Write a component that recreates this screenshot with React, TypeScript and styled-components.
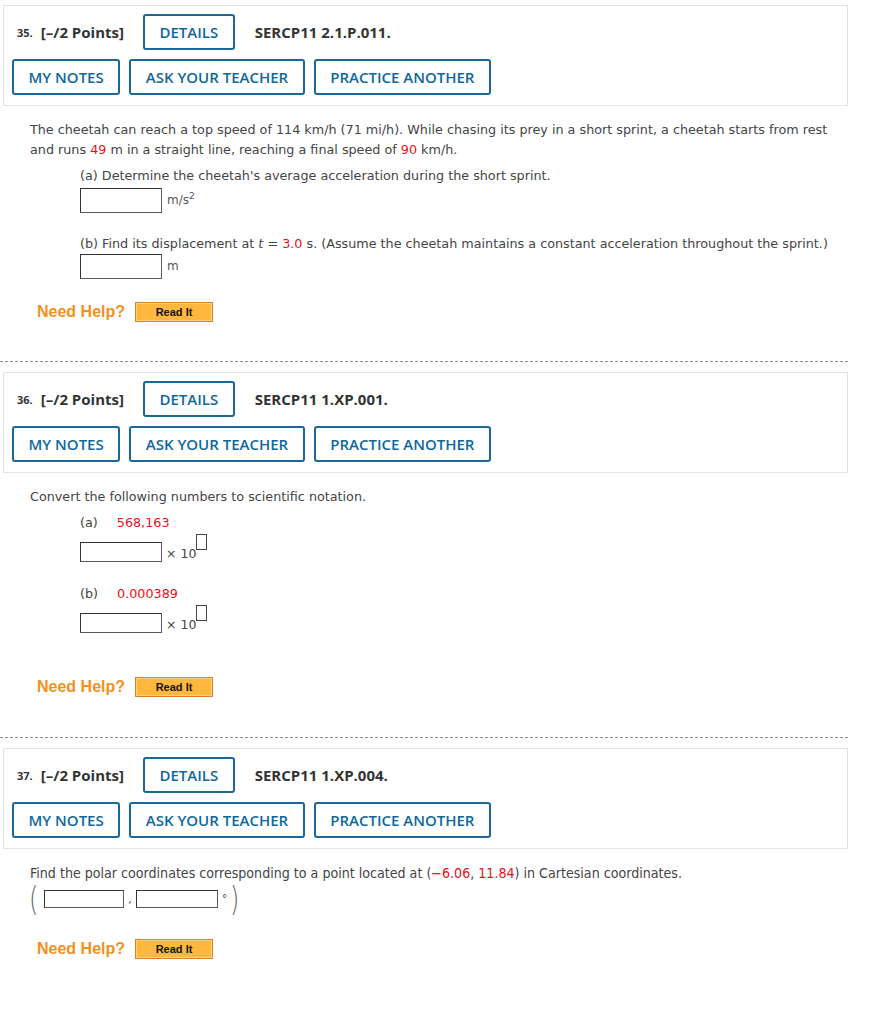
import React from "react";
import styled, { createGlobalStyle } from "styled-components";

const Global = createGlobalStyle`
  html, body { margin: 0; padding: 0; background: #fff; }
  body { font-family: "DejaVu Sans", Verdana, sans-serif; color: #333; }
`;

const Page = styled.div`
  width: 848px;
  padding-top: 5px;
`;

const Question = styled.section`
  display: flex;
  flex-direction: column;
`;

const Card = styled.div`
  margin-left: 3px;
  border: 1px solid #e2e2e2;
  padding: 8px 8px 10px 8px;
  display: flex;
  flex-direction: column;
  gap: 9px;
  font-family: "Open Sans", sans-serif;
`;

const HeadRow = styled.div<{ $indent?: boolean }>`
  display: flex;
  align-items: center;
  height: 36px;
  padding-left: ${(p) => (p.$indent ? "5px" : "0")};
  gap: 9px;
`;

const Num = styled.span`
  font-size: 11px;
  font-weight: 700;
  color: #333;
  margin-right: -1px;
`;

const Points = styled.span`
  font-size: 15px;
  font-weight: 700;
  color: #333;
  margin-right: 10px;
`;

const Code = styled.span`
  font-size: 15px;
  font-weight: 700;
  color: #333;
  margin-left: 11px;
`;

const Btn = styled.button`
  height: 36px;
  padding: 0 14.5px;
  border: 2px solid #1d6797;
  border-radius: 3px;
  background: #fff;
  color: #0f689c;
  font-family: "Open Sans", sans-serif;
  font-size: 15px;
  font-weight: 600;
  cursor: pointer;
`;

const Body = styled.div<{ $top: number }>`
  padding-left: 30px;
  margin-top: ${(p) => p.$top}px;
  font-size: 12.75px;
  line-height: 20px;
  color: #444;
`;

const Para = styled.p`
  margin: 0;
  width: 812px;
`;

const Red = styled.span`
  color: #e8101a;
`;

const Part = styled.div<{ $top?: number }>`
  padding-left: 50px;
  margin-top: ${(p) => p.$top ?? 0}px;
`;

const AnswerRow = styled.div<{ $top?: number }>`
  display: flex;
  align-items: flex-start;
  margin-top: ${(p) => p.$top ?? 0}px;
  gap: 5px;
`;

const Box = styled.span<{ $w: number; $h: number }>`
  display: inline-block;
  width: ${(p) => p.$w}px;
  height: ${(p) => p.$h}px;
  box-sizing: border-box;
  border: 1px solid #5a5a5a;
  border-top-color: #333;
  border-left-color: #333;
  background: #fff;
`;

const Unit = styled.span`
  font-size: 12px;
  line-height: 24px;
  color: #555;
`;

const Sup = styled.sup`
  font-size: 9px;
  line-height: 0;
`;

const Sci = styled.span`
  display: inline-flex;
  align-items: flex-end;
  font-size: 12.5px;
  color: #444;
  line-height: 16px;
  height: 20px;
  margin-left: -1px;
`;

const ExpBox = styled.span`
  display: inline-block;
  width: 11px;
  height: 16px;
  box-sizing: border-box;
  border: 1px solid #444;
  align-self: flex-start;
  margin-top: -8px;
`;

const Label = styled.div`
  display: flex;
  gap: 19px;
`;

const Help = styled.div`
  display: flex;
  align-items: center;
  gap: 10px;
  padding-left: 7px;
`;

const HelpText = styled.span`
  font-family: "Liberation Sans", Arial, sans-serif;
  font-size: 16px;
  font-weight: 700;
  color: #f39021;
`;

const ReadIt = styled.button`
  width: 78px;
  height: 20px;
  padding: 0;
  background: #ffb83e;
  border: 1px solid #d9822b;
  box-shadow: inset 0 0 0 1px #ffd27a;
  font-family: "Liberation Sans", Arial, sans-serif;
  font-size: 11px;
  font-weight: 700;
  color: #111;
  line-height: 16px;
  cursor: pointer;
`;

const Divider = styled.hr<{ $top: number }>`
  margin: ${(p) => p.$top}px 0 10px 0;
  border: none;
  border-top: 1px dashed #8a8a8a;
  height: 0;
  width: 848px;
`;

const Polar = styled.div`
  font-family: "DejaVu Sans Condensed", "DejaVu Sans", sans-serif;
  font-stretch: condensed;
  font-size: 14.1px;
  line-height: 20px;
  color: #444;
`;

const PolarRow = styled.div`
  display: flex;
  align-items: center;
  height: 32px;
  margin-left: -3px;
  gap: 4px;
`;

const Paren = styled.span<{ $close?: boolean }>`
  font-family: "DejaVu Sans", sans-serif;
  font-size: 34px;
  font-weight: 200;
  color: #666;
  line-height: 32px;
  transform: scaleX(0.7);
  margin-left: ${(p) => (p.$close ? "-3px" : "0")};
`;

const Small = styled.span`
  font-size: 12px;
  color: #555;
  line-height: 17px;
`;

function Header({ n, code }: { n: number; code: string }) {
  return (
    <Card>
      <HeadRow $indent>
        <Num>{n}.</Num>
        <Points>[–/2 Points]</Points>
        <Btn>DETAILS</Btn>
        <Code>{code}</Code>
      </HeadRow>
      <HeadRow>
        <Btn>MY NOTES</Btn>
        <Btn>ASK YOUR TEACHER</Btn>
        <Btn>PRACTICE ANOTHER</Btn>
      </HeadRow>
    </Card>
  );
}

function NeedHelp() {
  return (
    <Help>
      <HelpText>Need Help?</HelpText>
      <ReadIt>Read It</ReadIt>
    </Help>
  );
}

export default function App() {
  return (
    <Page>
      <Global />
      <Question>
        <Header n={35} code="SERCP11 2.1.P.011." />
        <Body $top={14}>
          <Para>
            The cheetah can reach a top speed of 114 km/h (71 mi/h). While chasing its prey in a short sprint, a cheetah
            starts from rest and runs <Red>49</Red> m in a straight line, reaching a final speed of <Red>90</Red> km/h.
          </Para>
          <Part $top={6}>
            <div>(a) Determine the cheetah's average acceleration during the short sprint.</div>
            <AnswerRow $top={2}>
              <Box $w={82} $h={25} />
              <Unit>
                m/s<Sup>2</Sup>
              </Unit>
            </AnswerRow>
          </Part>
          <Part $top={21}>
            <div>
              (b) Find its displacement at <i>t</i> = <Red>3.0</Red> s. (Assume the cheetah maintains a constant
              acceleration throughout the sprint.)
            </div>
            <AnswerRow $top={0}>
              <Box $w={82} $h={25} />
              <Unit>m</Unit>
            </AnswerRow>
          </Part>
        </Body>
        <Body $top={23}>
          <NeedHelp />
        </Body>
      </Question>
      <Divider $top={39} />
      <Question>
        <Header n={36} code="SERCP11 1.XP.001." />
        <Body $top={14}>
          <Para>Convert the following numbers to scientific notation.</Para>
          <Part $top={6}>
            <Label>
              <span>(a)</span>
              <Red>568,163</Red>
            </Label>
            <AnswerRow $top={9}>
              <Box $w={82} $h={20} />
              <Sci>
                × 10
                <ExpBox />
              </Sci>
            </AnswerRow>
          </Part>
          <Part $top={22}>
            <Label>
              <span>(b)</span>
              <Red>0.000389</Red>
            </Label>
            <AnswerRow $top={9}>
              <Box $w={82} $h={20} />
              <Sci>
                × 10
                <ExpBox />
              </Sci>
            </AnswerRow>
          </Part>
        </Body>
        <Body $top={44}>
          <NeedHelp />
        </Body>
      </Question>
      <Divider $top={40} />
      <Question>
        <Header n={37} code="SERCP11 1.XP.004." />
        <Body $top={14}>
          <Polar>
            Find the polar coordinates corresponding to a point located at (<Red>−6.06</Red>, <Red>11.84</Red>) in
            Cartesian coordinates.
            <PolarRow>
              <Paren>(</Paren>
              <Box $w={80} $h={18} />
              <Small>,</Small>
              <Box $w={82} $h={18} />
              <Small>°</Small>
              <Paren $close>)</Paren>
            </PolarRow>
          </Polar>
        </Body>
        <Body $top={24}>
          <NeedHelp />
        </Body>
      </Question>
    </Page>
  );
}
